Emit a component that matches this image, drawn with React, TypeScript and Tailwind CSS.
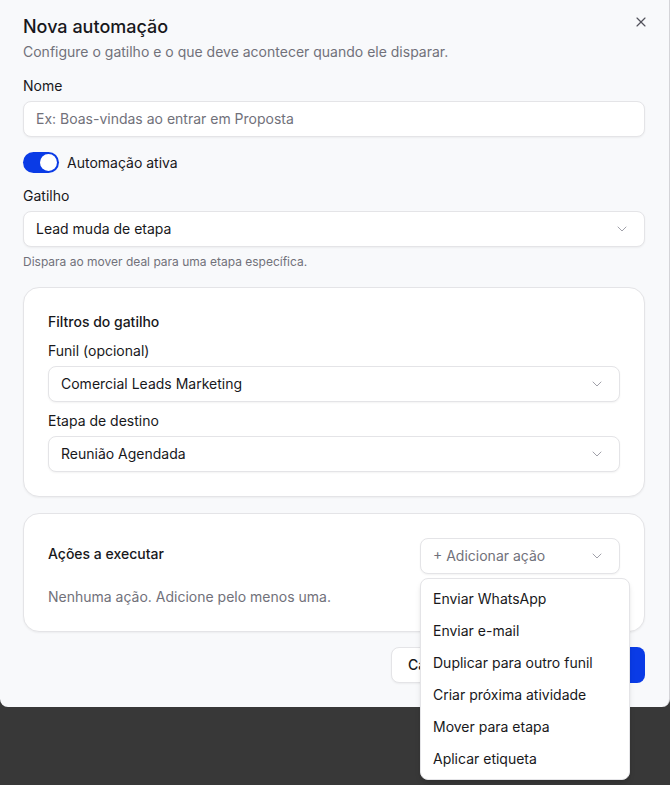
import { ChevronDown, X } from "lucide-react";

const menuItems = [
    "Enviar WhatsApp",
    "Enviar e-mail",
    "Duplicar para outro funil",
    "Criar próxima atividade",
    "Mover para etapa",
    "Aplicar etiqueta",
];

function SelectBox({ value }: { value: string }) {
    return (
        <div className="flex h-9 items-center justify-between rounded-lg border border-[#e4e4e7] bg-white pl-3 pr-[14px] text-sm text-[#18181b] shadow-xs">
            <span>{value}</span>
            <ChevronDown size={16} strokeWidth={1.5} className="text-[#a1a1aa]" />
        </div>
    );
}

function Label({ children }: { children: React.ReactNode }) {
    return <div className="text-sm leading-5 text-[#18181b]">{children}</div>;
}

export default function App() {
    return (
        <div
            className="min-h-screen bg-[#383838] text-[#18181b]"
            style={{ fontFamily: "Inter, 'Noto Sans', sans-serif" }}
        >
            <div className="relative flex flex-col rounded-b-lg border-r border-[#d4d4d8] bg-[#f8f9fb] pb-6 pl-[23px] pr-6 pt-[13px]">
                <button className="absolute right-[20px] top-[14px] text-[#52525b]">
                    <X size={16} strokeWidth={1.75} />
                </button>

                <h2 className="text-lg font-medium leading-7">Nova automação</h2>
                <p className="mt-px text-sm leading-5 text-[#71717a]">
                    Configure o gatilho e o que deve acontecer quando ele disparar.
                </p>

                <div className="mt-[14px]">
                    <Label>Nome</Label>
                    <div className="mt-[5px] flex h-9 items-center rounded-lg border border-[#e4e4e7] bg-white px-3 text-sm text-[#71717a] shadow-xs">
                        Ex: Boas-vindas ao entrar em Proposta
                    </div>
                </div>

                <div className="mt-[15px] flex items-center gap-2">
                    <div className="flex h-[21px] w-9 items-center rounded-full bg-[#0a3be6] p-[2px]">
                        <div className="ml-auto h-[17px] w-[17px] rounded-full bg-white" />
                    </div>
                    <span className="text-sm">Automação ativa</span>
                </div>

                <div className="mt-[13px]">
                    <Label>Gatilho</Label>
                    <div className="mt-[5px]">
                        <SelectBox value="Lead muda de etapa" />
                    </div>
                    <p className="mt-[7px] text-xs leading-4 text-[#71717a]">
                        Dispara ao mover deal para uma etapa específica.
                    </p>
                </div>

                <div className="mt-[17px] rounded-2xl border border-[#e4e4e7] bg-white px-6 py-6 shadow-xs">
                    <div className="text-sm font-medium leading-5">Filtros do gatilho</div>
                    <div className="mt-[9px]">
                        <Label>Funil (opcional)</Label>
                        <div className="mt-[5px]">
                            <SelectBox value="Comercial Leads Marketing" />
                        </div>
                    </div>
                    <div className="mt-[9px]">
                        <Label>Etapa de destino</Label>
                        <div className="mt-[5px]">
                            <SelectBox value="Reunião Agendada" />
                        </div>
                    </div>
                </div>

                <div className="mt-4 rounded-2xl border border-[#e4e4e7] bg-white px-6 pb-6 pt-6 shadow-xs">
                    <div className="flex items-center justify-between">
                        <div className="-mt-[5px] text-sm font-medium leading-5">
                            Ações a executar
                        </div>
                        <div className="relative w-[200px]">
                            <div className="flex h-9 items-center justify-between rounded-lg border border-[#e4e4e7] bg-white pl-3 pr-[14px] text-sm text-[#71717a] shadow-xs">
                                <span>+ Adicionar ação</span>
                                <ChevronDown size={16} strokeWidth={1.5} className="text-[#a1a1aa]" />
                            </div>
                            <div className="absolute left-0 top-[40px] z-10 w-[210px] rounded-lg border border-[#e4e4e7] bg-white p-1 shadow-md">
                                {menuItems.map((item) => (
                                    <div
                                        key={item}
                                        className="flex h-8 items-center px-2 text-sm text-[#18181b]"
                                    >
                                        {item}
                                    </div>
                                ))}
                            </div>
                        </div>
                    </div>
                    <p className="mt-[13px] text-sm leading-5 text-[#71717a]">
                        Nenhuma ação. Adicione pelo menos uma.
                    </p>
                </div>

                <div className="mt-[15px] flex justify-end gap-2">
                    <button className="h-9 rounded-lg border border-[#e4e4e7] bg-white px-4 text-sm font-medium shadow-xs">
                        Cancelar
                    </button>
                    <button className="h-9 rounded-lg bg-[#0a3be6] px-4 text-sm font-medium text-white">
                        Salvar automação
                    </button>
                </div>
            </div>
        </div>
    );
}
